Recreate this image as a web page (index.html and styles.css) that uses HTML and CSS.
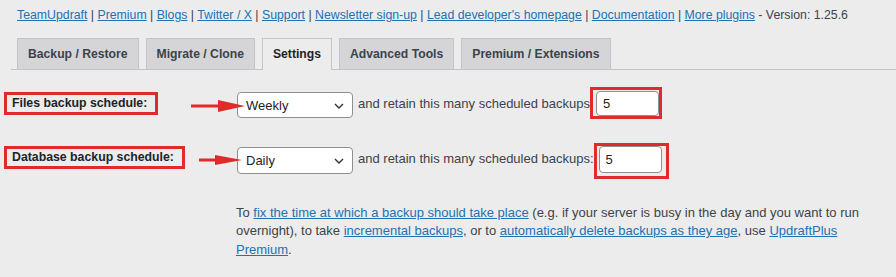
FILE: index.html
```html
<!DOCTYPE html>
<html lang="en">
<head>
<meta charset="utf-8">
<title>UpdraftPlus Settings</title>
<link rel="stylesheet" href="styles.css">
</head>
<body>
<div class="toplinks">
  <a href="#">TeamUpdraft</a> | <a href="#">Premium</a> | <a href="#">Blogs</a> | <a href="#">Twitter / X</a> | <a href="#">Support</a> | <a href="#">Newsletter sign-up</a> | <a href="#">Lead developer's homepage</a> | <a href="#">Documentation</a> | <a href="#">More plugins</a> - Version: 1.25.6
</div>
<nav class="tabs">
  <a class="tab" href="#">Backup / Restore</a>
  <a class="tab" href="#">Migrate / Clone</a>
  <a class="tab tab-active" href="#">Settings</a>
  <a class="tab" href="#">Advanced Tools</a>
  <a class="tab" href="#">Premium / Extensions</a>
</nav>
<div class="form">
  <div class="row row-files">
    <div class="label-cell">
      <span class="label-box label-files">Files backup schedule:</span>
    </div>
    <div class="select"><span>Weekly</span><svg class="chev" width="10" height="6" viewBox="0 0 10 6"><path d="M1 1 L5 5 L9 1" fill="none" stroke="#2c3338" stroke-width="1.4"/></svg></div>
    <span class="retain">and retain this many scheduled backups</span>
    <span class="input-box input-box-files"><span class="input">5</span></span>
    <svg class="arrow arrow-files" width="60" height="20" viewBox="0 0 60 20"><path d="M0 10 H30" stroke="#e02b2b" stroke-width="3"/><path d="M27 4 L54 10 L27 16 Z" fill="#e02b2b"/></svg>
  </div>
  <div class="row row-db">
    <div class="label-cell">
      <span class="label-box label-db">Database backup schedule:</span>
    </div>
    <div class="select"><span>Daily</span><svg class="chev" width="10" height="6" viewBox="0 0 10 6"><path d="M1 1 L5 5 L9 1" fill="none" stroke="#2c3338" stroke-width="1.4"/></svg></div>
    <span class="retain">and retain this many scheduled backups:</span>
    <span class="input-box input-box-db"><span class="input input-db">5</span></span>
    <svg class="arrow arrow-db" width="50" height="20" viewBox="0 0 50 20"><path d="M0 10 H20" stroke="#e02b2b" stroke-width="3"/><path d="M16 5 L43 10 L16 15 Z" fill="#e02b2b"/></svg>
  </div>
</div>
<p class="note"><span>To</span> <a href="#">fix the time at which a backup should take place</a> <span>(e.g. if your server is busy in the day and you want to run</span> <span>overnight), to take</span> <a href="#">incremental backups</a><span>, or to</span> <a href="#">automatically delete backups as they age</a><span>, use</span> <a href="#">UpdraftPlus</a> <a href="#">Premium</a><span>.</span></p>
</body>
</html>
```
FILE: styles.css
```css
html, body {
  margin: 0;
  padding: 0;
}
body {
  width: 896px;
  height: 277px;
  overflow: hidden;
  background: #ececec;
  font-family: "Liberation Sans", Arial, sans-serif;
  font-size: 13px;
  color: #3c434a;
}
a {
  color: #2271b1;
  text-decoration: underline;
}
.toplinks {
  padding: 7px 0 0 17px;
  font-size: 12.3px;
  line-height: 16px;
  height: 16px;
  white-space: nowrap;
}
.tabs {
  display: flex;
  align-items: flex-end;
  gap: 7px;
  margin: 15px 0 0 11px;
  padding-left: 6px;
  border-bottom: 1px solid #c3c4c7;
  height: 31px;
}
.tab {
  display: block;
  box-sizing: border-box;
  height: 31px;
  line-height: 30px;
  padding: 0 10px;
  border: 1px solid #c3c4c7;
  border-bottom: none;
  background: #d5d5d7;
  color: #3c434a;
  font-weight: bold;
  font-size: 12.2px;
  text-decoration: none;
  white-space: nowrap;
}
.tab-active {
  background: #ececec;
  color: #1d2327;
  height: 32px;
  margin-bottom: -1px;
}
.form {
  margin-top: 17px;
}
.row {
  position: relative;
  display: flex;
  align-items: flex-start;
  margin-left: 4px;
}
.row-db {
  margin-top: 24px;
}
.label-cell {
  width: 233px;
  flex: none;
}
.label-box {
  display: block;
  box-sizing: border-box;
  height: 23px;
  border: 3px solid #e02b2b;
  padding-left: 5px;
  line-height: 17px;
  font-weight: bold;
  font-size: 12.3px;
  color: #1d2327;
  white-space: nowrap;
}
.label-files {
  width: 154px;
  margin-top: 5px;
}
.label-db {
  width: 181px;
  margin-top: 3px;
}
.select {
  box-sizing: border-box;
  width: 116px;
  height: 26px;
  flex: none;
  display: flex;
  align-items: center;
  justify-content: space-between;
  padding: 0 8px 0 8px;
  background: #fff;
  border: 1px solid #8c8f94;
  border-radius: 4px;
  color: #1d2327;
  font-size: 13px;
  margin-top: 5px;
}
.row-db .select {
  margin-top: 4px;
  height: 27px;
}
.chev {
  display: block;
  margin-top: 1px;
}
.retain {
  margin-left: 5px;
  line-height: 16px;
  margin-top: 9px;
  white-space: nowrap;
}
.row-db .retain {
  margin-top: 8px;
}
.input-box {
  display: block;
  border: 3px solid #e02b2b;
  flex: none;
}
.input-box-files {
  padding: 1px 0 0 3px;
}
.input-box-db {
  padding: 0 4px 3px 2px;
}
.input {
  display: block;
  box-sizing: border-box;
  width: 63px;
  height: 25px;
  line-height: 23px;
  padding-left: 6px;
  background: #fff;
  border: 1px solid #8c8f94;
  border-radius: 4px;
  color: #1d2327;
  font-size: 13px;
}
.input-db {
  height: 27px;
  line-height: 25px;
}
.arrow {
  position: absolute;
}
.arrow-files {
  left: 187px;
  top: 9px;
}
.arrow-db {
  left: 195px;
  top: 7px;
}
.note {
  margin: 25px 0 0 236px;
  width: 640px;
  line-height: 18.3px;
}
```
